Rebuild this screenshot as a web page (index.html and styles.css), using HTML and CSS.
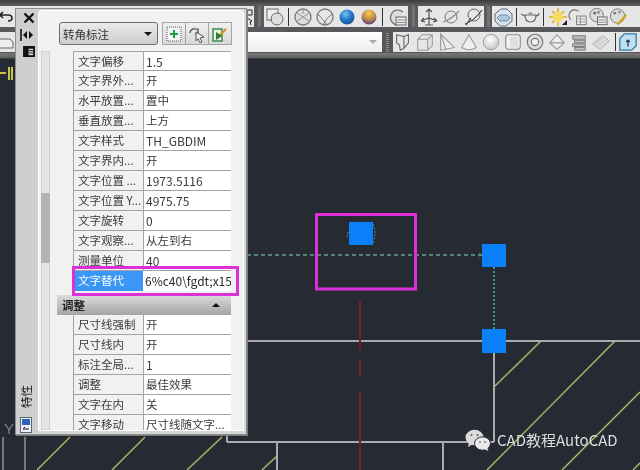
FILE: index.html
```html
<!DOCTYPE html>
<html lang="zh">
<head>
<meta charset="utf-8">
<title>CAD 特性</title>
<link rel="stylesheet" href="styles.css">
</head>
<body>
<div class="app">
  <header class="toolbars">
    <div class="tb-row tb-row-1">
      <div class="tb-section tb-lead">
        <svg class="lead-icon" viewBox="0 0 15 16"><path d="M0 6h8q4 0 4 3t-4 3M0 6l3-3M0 6l3 3" fill="none" stroke="#222" stroke-width="1.6"/></svg>
        <svg class="lead-tail" viewBox="0 0 8 18"><path d="M1 2h5v5H1zM1 10l5 3-2 1 1 3" fill="none" stroke="#222"/></svg>
      </div>
      <span class="grip grip-a"></span>
      <div class="tb-section">
        <svg class="ic" viewBox="0 0 22 22"><rect x="3" y="3" width="11" height="11" fill="#eee" stroke="#666"/><circle cx="13" cy="13" r="6" fill="#ddd" stroke="#666"/></svg>
        <i class="sep"></i>
        <svg class="ic" viewBox="0 0 22 22"><circle cx="11" cy="11" r="8" fill="#ddd" stroke="#777" stroke-width="1.3"/><path d="M5 7l12 8M17 7L5 15M11 3v5" fill="none" stroke="#999"/></svg>
        <svg class="ic" viewBox="0 0 22 22"><circle cx="11" cy="11" r="8" fill="#e6e6e6" stroke="#777" stroke-width="1.3"/><path d="M4 8q7 8 9 11M18 8q-6 4-9 11" fill="none" stroke="#777"/></svg>
        <svg class="ic" viewBox="0 0 22 22"><circle cx="11" cy="11" r="7.5" fill="url(#ball-blue)"/></svg>
        <svg class="ic" viewBox="0 0 22 22"><circle cx="11" cy="11" r="7.5" fill="url(#ball-gold)"/></svg>
        <i class="sep"></i>
        <svg class="ic" viewBox="0 0 22 22"><path d="M17 6a7.500 7.500 0 1 0-6 13" fill="#ddd" stroke="#777" stroke-width="1.3"/><rect x="10" y="11" width="10" height="8" fill="#eee" stroke="#666"/><path d="M11 14h8M11 16.500h8" stroke="#888"/></svg>
      </div>
      <span class="grip grip-b"></span>
      <div class="tb-section">
        <svg class="ic" viewBox="0 0 22 22"><path d="M11 3v16M3 15l8-3 8 3M3 15l3-3M3 15l4 1M19 15l-3-3M19 15l-4 1M8 6l3-3 3 3M7 19h8" fill="none" stroke="#555" stroke-width="1.2"/></svg>
        <svg class="ic" viewBox="0 0 22 22"><circle cx="11" cy="11" r="6" fill="#e6e6e6" stroke="#777"/><path d="M3 16Q12 13 19 5" fill="none" stroke="#888" stroke-width="1.200"/></svg>
        <svg class="ic" viewBox="0 0 22 22"><circle cx="12" cy="9" r="6" fill="#e6e6e6" stroke="#666"/><path d="M3 18Q12 15 20 4M4 19l5-7" fill="none" stroke="#444" stroke-width="1.200"/></svg>
      </div>
      <span class="grip grip-c"></span>
      <div class="tb-section tb-fill">
        <svg class="ic" viewBox="0 0 22 22"><path d="M3 8l6-5h6l5 5v7l-6 5H8l-5-5z" fill="#d6e4ef" stroke="#667"/><path d="M8 9h7l3 3-3 3H8l-3-3z" fill="#aac8e0" stroke="#789"/></svg>
        <i class="sep sep-narrow"></i>
        <svg class="ic" viewBox="0 0 22 22"><path d="M6 9h11q0 7-5.500 7T6 9zM6 10L2 8M17 10q3 0 3-3M10 8q1.500-2 3 0" fill="#e8e8e8" stroke="#666" stroke-width="1.200"/></svg>
        <i class="sep"></i>
        <svg class="ic" viewBox="0 0 22 22"><path d="M11 2v4M11 16v4M2 11h4M16 11h4M5 5l3 3M17 5l-3 3M5 17l3-3" stroke="#e0b020" stroke-width="1.600"/><circle cx="11" cy="11" r="5" fill="#f6dd60"/><path d="M15 19l5-5v5z" fill="#222"/></svg>
        <svg class="ic ic-tight" viewBox="0 0 22 22"><path d="M3 14a6 6 0 0 1 8-9" fill="none" stroke="#777" stroke-width="1.300"/><rect x="9" y="10" width="10" height="9" fill="#eee" stroke="#777"/><path d="M10 13h8M10 16h8M13 10v9" stroke="#999"/></svg>
        <svg class="ic ic-tight" viewBox="0 0 22 22"><circle cx="9" cy="9" r="7" fill="#ddd" stroke="#777"/><circle cx="7" cy="7" r="1.500" fill="#666"/><circle cx="11" cy="6" r="1.500" fill="#888"/><rect x="10" y="11" width="10" height="8" fill="#eee" stroke="#666"/><path d="M11 14h8M11 16.500h8" stroke="#888"/></svg>
        <svg class="ic ic-tight" viewBox="0 0 22 22"><circle cx="10" cy="10" r="7.500" fill="#ddd" stroke="#777"/><circle cx="7" cy="7" r="1.500" fill="#777"/><circle cx="12" cy="6" r="1.500" fill="#999"/><path d="M10 19l9-10" stroke="#d9a520" stroke-width="2.400"/></svg>
      </div>
    </div>
    <div class="tb-row tb-row-2">
      <div class="tb-section tb-lead2">
        <svg class="lead-box" viewBox="0 0 15 16"><path d="M-2 5h12l3 3v6H-2zM10 5v0" fill="#eee" stroke="#666"/></svg>
      </div>
      <div class="combo-wide"><span class="combo-wide-arrow"></span></div>
      <span class="grip grip-d"></span>
      <div class="tb-section tb-fill tb-solids">
        <svg class="ic2" viewBox="0 0 22 22"><path d="M4 3l8 2v13L8 20l-1-6-3-2zM12 5l5-2v9l-5 6" fill="#e6e6e6" stroke="#666" stroke-width="1.200"/></svg>
        <svg class="ic2" viewBox="0 0 22 22"><path d="M3 8l5-5h11v12l-5 5H3zM3 8h11v12M14 8l5-5" fill="#e6e6e6" stroke="#999" stroke-width="1.200"/></svg>
        <svg class="ic2" viewBox="0 0 22 22"><path d="M4 2l15 15-15 3zM4 2l6 18" fill="#ececec" stroke="#999" stroke-width="1.200"/></svg>
        <svg class="ic2" viewBox="0 0 22 22"><path d="M11 3L3 17q8 5 16 0z" fill="#f0f0f0" stroke="#999" stroke-width="1.200"/></svg>
        <svg class="ic2" viewBox="0 0 22 22"><circle cx="11" cy="11" r="8.500" fill="url(#ball-grey)" stroke="#999"/></svg>
        <svg class="ic2" viewBox="0 0 22 22"><rect x="3" y="3" width="16" height="16" rx="3" fill="#f0f0f0" stroke="#888" stroke-width="1.200"/><rect x="8" y="5" width="9" height="12" fill="#ddd"/></svg>
        <svg class="ic2" viewBox="0 0 22 22"><circle cx="11" cy="11" r="8.500" fill="#ddd" stroke="#777" stroke-width="1.300"/><circle cx="11" cy="11" r="4" fill="#f4f4f4" stroke="#777" stroke-width="1.300"/></svg>
        <svg class="ic2" viewBox="0 0 22 22"><path d="M11 3l8 9-8 7-8-7zM3 12h16" fill="#efefef" stroke="#999" stroke-width="1.200"/></svg>
        <svg class="ic2" viewBox="0 0 22 22"><path d="M4 4h14v4H4zM6 9h12v3H6zM4 13h14v3H4zM6 17h12v3H6z" fill="#bbb" stroke="#777"/></svg>
        <svg class="ic2" viewBox="0 0 22 22"><path d="M2 13L13 4l7 6-10 9z" fill="#ddd" stroke="#aaa"/><path d="M5 13l8-6M8 15l8-6" stroke="#bbb"/></svg>
        <i class="sep sep-narrow"></i>
        <svg class="ic2" viewBox="0 0 22 22"><path d="M2 7l5-5h13v13l-5 5H2z" fill="#bfe0f0" stroke="#2a7aa8" stroke-width="1.400"/><path d="M11 16V9M9 11l2-2 2 2" fill="none" stroke="#134" stroke-width="1.300"/></svg>
      </div>
    </div>
    <div class="tb-foot"></div>
  </header>

  <svg class="drawing" viewBox="0 0 640 470">
    <defs>
      <radialGradient id="ball-blue" cx=".4" cy=".3" r=".8"><stop offset="0" stop-color="#7cc0f0"/><stop offset=".5" stop-color="#2078c8"/><stop offset="1" stop-color="#154a90"/></radialGradient>
      <radialGradient id="ball-gold" cx=".5" cy=".25" r=".85"><stop offset="0" stop-color="#f8d048"/><stop offset=".5" stop-color="#c08850"/><stop offset="1" stop-color="#3a2a90"/></radialGradient>
      <radialGradient id="ball-grey" cx=".45" cy=".35" r=".8"><stop offset="0" stop-color="#fff"/><stop offset="1" stop-color="#bbb"/></radialGradient>
    </defs>
    <path class="mark-yellow" d="M0 73h6M9 67v13M12 67v13"/>
    <g class="hatch">
      <path d="M494 387L541 341M615 341L487 470M640 392L562 470M640 463L633 470M70 437L37 470M145 437L112 470M222 437L187 470M277 456L262 470"/>
    </g>
    <g class="hatch-core">
      <path d="M494 387L541 341M615 341L487 470M640 392L562 470M640 463L633 470M70 437L37 470M145 437L112 470M222 437L187 470M277 456L262 470"/>
    </g>
    <path class="geo" d="M247 341H640M494 341V442M227 442H494M227 432V442M277 442V470M443 442V470"/>
    <path class="geo-thin" d="M3 437V470M25 437V470"/>
    <path class="center-line" d="M360 300V350M360 360V377M360 392V470"/>
    <path class="dim-dash" d="M247 255H482"/>
    <path class="dim-dot" d="M494 267V329"/>
    <path class="arc-mark" d="M373 224q4 9 0 19M346 236h3M348 232v3M479 253l3 2-3 3"/>
    <rect class="grip-square" x="349" y="222" width="24" height="23"/>
    <rect class="grip-square" x="482" y="244" width="24" height="23"/>
    <rect class="grip-square" x="482" y="329" width="24" height="24"/>
    <rect class="pink" x="316.500" y="214.500" width="99" height="74.500"/>
    <text class="ucs" x="4" y="434">Y</text>
  </svg>

  <aside class="palette">
    <div class="strip">
      <svg class="strip-x" viewBox="0 0 12 12"><path d="M1.500 1.500l9 9M10.500 1.500l-9 9" stroke="#111" stroke-width="2.400"/></svg>
      <svg class="strip-hide" viewBox="0 0 13 12"><path d="M1 0v12" stroke="#111" stroke-width="1.600"/><path d="M3 6l4-4v8zM13 6L9 2v8z" fill="#111"/></svg>
      <svg class="strip-props" viewBox="0 0 13 12"><path d="M0 0h13v12H0z" fill="#111"/><path d="M6 3h5v7H6z" fill="#ddd"/><path d="M6 5h5M6 7.500h5" stroke="#111"/></svg>
      <span class="strip-title">特性</span>
      <svg class="strip-foot" viewBox="0 0 12 16"><rect x=".5" y=".5" width="11" height="15" fill="#eef" stroke="#567"/><rect x="2" y="2" width="8" height="6" fill="#2f62b8"/><path d="M3 12h6M3 12l2-2" fill="none" stroke="#111"/></svg>
    </div>
    <div class="panel">
      <div class="panel-top">
        <div class="combo"><span class="combo-text">转角标注</span><span class="combo-arrow"></span></div>
        <div class="btn-group">
          <span class="btn"><svg viewBox="0 0 18 18"><rect x="2" y="2" width="14" height="14" fill="#f4f4f4" stroke="#556" stroke-dasharray="1 1"/><path d="M9 5v8M5 9h8" stroke="#1a9a3a" stroke-width="2"/></svg></span>
          <span class="btn"><svg viewBox="0 0 18 18"><path d="M2 8a4 4 0 0 1 5-4h3v5H7" fill="none" stroke="#345" stroke-width="1.200"/><path d="M8 7l8 5-4 1 2 4-2 .8-2-4-2 2z" fill="#eee" stroke="#333" stroke-width=".8"/></svg></span>
          <span class="btn"><svg viewBox="0 0 18 18"><rect x="2" y="4" width="9" height="12" fill="#e8f0e0" stroke="#2a7a3a" stroke-width="1.300"/><path d="M8 11l7-7" stroke="#c89a20" stroke-width="2.400"/><path d="M5 7l6 4-6 4z" fill="#2a7a3a"/></svg></span>
        </div>
      </div>
      <div class="panel-body">
        <div class="scroll"><div class="scroll-thumb"></div></div>
        <div class="props">
          <div class="row"><span class="k">文字偏移</span><span class="v">1.5</span></div>
          <div class="row"><span class="k">文字界外...</span><span class="v zh">开</span></div>
          <div class="row"><span class="k">水平放置...</span><span class="v zh">置中</span></div>
          <div class="row"><span class="k">垂直放置...</span><span class="v zh">上方</span></div>
          <div class="row"><span class="k">文字样式</span><span class="v">TH_GBDIM</span></div>
          <div class="row"><span class="k">文字界内...</span><span class="v zh">开</span></div>
          <div class="row"><span class="k">文字位置 ...</span><span class="v">1973.5116</span></div>
          <div class="row"><span class="k">文字位置 Y...</span><span class="v">4975.75</span></div>
          <div class="row"><span class="k">文字旋转</span><span class="v">0</span></div>
          <div class="row"><span class="k">文字观察...</span><span class="v zh">从左到右</span></div>
          <div class="row"><span class="k">测量单位</span><span class="v">40</span></div>
          <div class="row row-active"><span class="k">文字替代</span><span class="v">6%c40\fgdt;x15</span></div>
          <div class="section-head"><span>调整</span><span class="section-arrow"></span></div>
          <div class="row"><span class="k">尺寸线强制</span><span class="v zh">开</span></div>
          <div class="row"><span class="k">尺寸线内</span><span class="v zh">开</span></div>
          <div class="row"><span class="k">标注全局...</span><span class="v">1</span></div>
          <div class="row"><span class="k">调整</span><span class="v zh">最佳效果</span></div>
          <div class="row"><span class="k">文字在内</span><span class="v zh">关</span></div>
          <div class="row row-last"><span class="k">文字移动</span><span class="v zh">尺寸线随文字...</span></div>
        </div>
      </div>
    </div>
    <div class="row-mark"></div>
  </aside>

  <div class="watermark">
    <svg class="wechat" viewBox="0 0 26 22"><ellipse cx="9.500" cy="8.500" rx="9" ry="7.800" fill="#dcdcdc"/><path d="M4 13l-1 5 5-3z" fill="#dcdcdc"/><ellipse cx="17.500" cy="14.500" rx="8" ry="6.700" stroke="#252a33" fill="#e8e8e8"/><path d="M22 18l1.500 4-4.500-2z" fill="#e8e8e8"/><circle cx="6.500" cy="6" r="1.100" fill="#666"/><circle cx="12.500" cy="6" r="1.100" fill="#666"/><circle cx="15" cy="13" r=".9" fill="#777"/><circle cx="20" cy="13" r=".9" fill="#777"/></svg>
    <span>CAD教程AutoCAD</span>
  </div>
</div>
</body>
</html>
```
FILE: styles.css
```css
* { box-sizing: border-box; }
html, body { margin: 0; padding: 0; }
body { background: #252a33; }
.app {
  position: relative;
  width: 640px;
  height: 470px;
  overflow: hidden;
  background: #252a33;
  font-family: "Noto Sans CJK SC", "Liberation Sans", sans-serif;
  filter: blur(0.45px);
}

/* toolbars */
.toolbars {
  height: 59px;
  padding-top: 6px;
  background: linear-gradient(#3a3a3c 0, #5a5b5d 5px, #55565a 100%);
  display: flex;
  flex-direction: column;
}
.tb-row { display: flex; align-items: stretch; }
.tb-row-1 { height: 21px; }
.tb-row-2 { height: 20px; margin-top: 5px; }
.tb-section {
  display: flex;
  align-items: center;
  background: #e6e6e6;
}
.tb-fill { flex: 1; overflow: hidden; }
.tb-lead { width: 254px; justify-content: space-between; }
.lead-icon { width: 15px; height: 16px; }
.lead-tail { width: 8px; height: 18px; }
.tb-lead2 { width: 247px; }
.lead-box { width: 15px; height: 16px; }
.ic { width: 22px; height: 22px; flex: none; }
.ic-tight { width: 21px; margin-left: -1px; }
.ic2 { width: 20px; height: 20px; flex: none; margin-right: 2px; }
.sep { width: 6px; height: 18px; flex: none; position: relative; }
.sep::after { content: ""; display: block; width: 1px; height: 18px; margin-left: 2px; background: #333; }
.sep-narrow { width: 5px; }
.grip {
  flex: none;
  background-image: linear-gradient(#8a8a8a 50%, transparent 50%);
  background-size: 3px 2px;
  background-repeat: repeat-y;
  background-position: center;
}
.grip-a { width: 10px; }
.grip-b { width: 10px; }
.grip-c { width: 8px; }
.grip-d { width: 11px; }
.combo-wide {
  width: 135px;
  background: linear-gradient(#ffffff, #ececec);
  display: flex;
  align-items: center;
  justify-content: flex-end;
  padding-right: 5px;
}
.combo-wide-arrow {
  width: 0;
  height: 0;
  border-left: 4px solid transparent;
  border-right: 4px solid transparent;
  border-top: 4px solid #aaa;
}
.tb-solids { padding-left: 0; }
.tb-foot { flex: 1; margin-top: 1px; background: linear-gradient(#777, #666 70%, #333); }

/* model space drawing */
.drawing { position: absolute; left: 0; top: 0; width: 640px; height: 470px; pointer-events: none; }
.mark-yellow { fill: none; stroke: #c8c44a; stroke-width: 2; }
.hatch path { fill: none; stroke: #6f7440; stroke-width: 2; }
.hatch-core path { fill: none; stroke: #dde29a; stroke-width: .7; }
.geo { fill: none; stroke: #a9abae; stroke-width: 2; }
.geo-thin { fill: none; stroke: #c6c7c9; stroke-width: 1; }
.center-line { fill: none; stroke: #7c1c2a; stroke-width: 2; }
.dim-dash { fill: none; stroke: #84dcc8; stroke-width: 1; stroke-dasharray: 4 3; }
.dim-dot { fill: none; stroke: #3f8f92; stroke-width: 2; stroke-dasharray: 2 2; }
.arc-mark { fill: none; stroke: #4aa56a; stroke-width: 1; stroke-dasharray: 2 1.500; }
.grip-square { fill: #0a80fb; }
.pink { fill: none; stroke: #de30d8; stroke-width: 3; }
.ucs { font-family: "Liberation Sans", sans-serif; font-size: 15px; fill: #7d8186; }

/* palette */
.palette {
  position: absolute;
  left: 15px;
  top: 8px;
  width: 232px;
  height: 427px;
  display: flex;
  padding: 1px 2px 1px 0;
  background: #d6d6d6;
  border: 1px solid #8e8e8e;
  box-shadow: 1px 1px 0 #777;
}
.strip {
  width: 22px;
  flex: none;
  display: flex;
  flex-direction: column;
  align-items: center;
  padding: 2px 0 0;
  background: #cfcfcf;
  color: #111;
}
.strip-x { width: 12px; height: 12px; margin-left: 4px; }
.strip-hide { width: 13px; height: 12px; margin-top: 5px; margin-left: -2px; }
.strip-props { width: 12px; height: 11px; margin-top: 5px; margin-left: 4px; }
.strip-title {
  margin-top: auto;
  font-size: 11.5px;
  line-height: 13px;
  writing-mode: vertical-rl;
  text-orientation: sideways;
  transform: rotate(180deg);
  margin-left: -1px;
}
.strip-foot { width: 12px; height: 16px; margin-top: 9px; margin-left: -2px; }
.panel {
  flex: 1;
  min-width: 0;
  margin-bottom: 2px;
  background: #f1f1f1;
  border: 1px solid #fff;
  border-radius: 4px 4px 0 0;
  padding: 11px 12px 0 2px;
  display: flex;
  flex-direction: column;
}
.panel-top { display: flex; margin-left: 18px; height: 23px; }
.combo {
  width: 99px;
  display: flex;
  align-items: center;
  justify-content: space-between;
  padding: 0 5px 0 3px;
  background: linear-gradient(#ebebeb, #cdcdcd);
  border: 1px solid #6f6f6f;
  border-radius: 3px;
  font-size: 11.5px;
  color: #333;
}
.combo-arrow {
  width: 0;
  height: 0;
  border-left: 4px solid transparent;
  border-right: 4px solid transparent;
  border-top: 4px solid #111;
}
.btn-group { display: flex; margin-left: 4px; }
.btn {
  width: 24px;
  display: flex;
  align-items: center;
  justify-content: center;
  background: linear-gradient(#f0f0f0, #d8d8d8);
  border: 1px solid #a4a4a4;
  margin-right: -1px;
}
.btn svg { width: 18px; height: 18px; }
.panel-body { flex: 1; display: flex; min-height: 0; margin-top: 6px; overflow: hidden; }
.scroll {
  width: 9px;
  flex: none;
  margin-right: 7px;
  background: #e4e4e4;
  border: 1px solid #d0d0d0;
  padding-top: 141px;
}
.scroll-thumb { height: 70px; background: #b4b4b4; margin: 0 -1px; }
.props { width: 175px; overflow: hidden; }
.row {
  display: grid;
  grid-template-columns: 69px 89px;
  height: 20px;
  margin-left: 16px;
  border-bottom: 1px solid #a3a3a3;
  border-left: 1px solid #a3a3a3;
  font-size: 11.5px;
  line-height: 19px;
  color: #3a3a3a;
}
.k { padding-left: 4px; background: #f1f1f1; white-space: nowrap; overflow: hidden; }
.v { padding-left: 2px; background: #fff; border-left: 1px solid #a3a3a3; border-right: 1px solid #a3a3a3; white-space: nowrap; overflow: hidden; font-size: 12px; }
.v.zh { font-size: 11.5px; }
.row:first-child { border-top: 1px solid #a3a3a3; }
.row-active { border: 0; grid-template-columns: 70px 89px; }
.row-active .k { background: #3b97f5; color: #fff; padding-left: 5px; }
.row-active .v { border-left: 0; border-right: 1px solid #333; color: #2a2a2a; padding-left: 2px; }
.row-last { height: 16px; border-bottom: 0; line-height: 14px; }
.row-last .k, .row-last .v { padding-top: 2px; }
.section-head {
  height: 20px;
  margin-top: 4px;
  padding: 0 11px 0 5px;
  display: flex;
  align-items: center;
  justify-content: space-between;
  background: linear-gradient(#dcdcdc, #a4a4a4);
  font-size: 11.5px;
  font-weight: 700;
  color: #222;
}
.section-arrow {
  width: 0;
  height: 0;
  border-left: 4px solid transparent;
  border-right: 4px solid transparent;
  border-bottom: 4px solid #111;
}
.row-mark {
  position: absolute;
  left: 56px;
  top: 257px;
  width: 167px;
  height: 30px;
  border: 3px solid #de30d8;
}

/* watermark */
.watermark {
  position: absolute;
  left: 465px;
  top: 429px;
  display: flex;
  align-items: center;
  gap: 6px;
  font-size: 15px;
  line-height: 22px;
  color: #dedede;
}
.wechat { width: 26px; height: 22px; }
```
